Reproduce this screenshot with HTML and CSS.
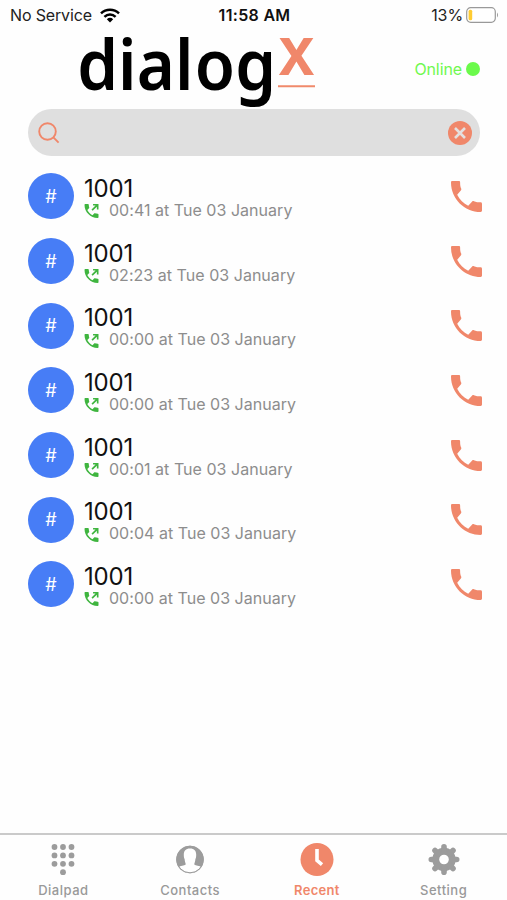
FILE: index.html
```
<!DOCTYPE html>
<html lang="en">
<head>
<meta charset="utf-8">
<title>dialogx – Recent</title>
<link rel="stylesheet" href="styles.css">
</head>
<body>
<svg class="defs" width="0" height="0" aria-hidden="true">
  <symbol id="phone" viewBox="3 3 18 18"><path d="M6.600 11c1.400 2.800 3.700 5 6.400 6.400l2.300-2.500c.3-.3.700-.3 1-.2 1.200.5 2.500.7 3.900.7.500 0 .8.400.8.9V20.200c0 .5-.3.800-.8.800C10.800 21 3 13.300 3 3.800c0-.5.300-.8.800-.8h3.700c.5 0 .8.300.8.800 0 1.400.1 2.600.6 3.600.2.400.1.800-.2 1.100z"/></symbol>
  <symbol id="outgoing" viewBox="3 3 18 18"><path d="M6.620 10.790c1.440 2.830 3.760 5.140 6.590 6.590l2.200-2.200c.27-.27.67-.36 1.020-.24 1.120.37 2.330.57 3.570.57.55 0 1 .45 1 1V20c0 .55-.45 1-1 1C10.610 21 3 13.390 3 4c0-.55.45-1 1-1h3.500c.55 0 1 .45 1 1 0 1.250.2 2.450.57 3.570.11.35.03.74-.25 1.020z"/><path d="M14 3v2h3.200l-5.200 5.200 1.500 1.500L18.900 6.400V10H21V3z"/></symbol>
</svg>
<main class="screen">
  <div class="status">
    <div class="carrier"><span>No Service</span>
      <svg width="20" height="15" viewBox="0 0 20 15"><g fill="none" stroke="#000" stroke-width="2.500"><path d="M1 5.300a13 13 0 0 1 18 0"/><path d="M4.400 8.800a8.200 8.200 0 0 1 11.200 0"/></g><path d="M6.800 11.200a4.700 4.700 0 0 1 6.400 0L10 14.500z"/></svg>
    </div>
    <div class="clock">11:58 AM</div>
    <div class="battery"><span>13%</span>
      <svg width="33" height="16" viewBox="0 0 33 16"><rect x=".7" y=".7" width="28.600" height="14.600" rx="4" fill="#fff" stroke="#999" stroke-width="1.200"/><rect x="2.600" y="2.700" width="3.600" height="10.600" rx="1.500" fill="#fc3"/><path d="M31 5.500q2 2.500 0 5z" fill="#999"/></svg>
    </div>
  </div>
  <header class="header">
    <svg class="logo" width="250" height="79" viewBox="0 0 250 79">
      <text class="word" transform="scale(.92 1)" x="7.800 52.200 72.600 114 135.500 179.500" y="59.500">dialog</text>
      <text class="mark" x="208.500" y="44.500" textLength="36" lengthAdjust="spacingAndGlyphs">x</text>
      <path d="M208 56.300h37" stroke="#f08a6b" stroke-width="2"/>
    </svg>
    <div class="online"><span>Online</span><i class="dot"></i></div>
  </header>
  <div class="search">
    <svg width="22" height="22" viewBox="0 0 22 22" fill="none" stroke="#f0876a" stroke-width="1.900"><circle cx="9.500" cy="9.500" r="8.300"/><path d="M15.400 15.400l5.200 5.200"/></svg>
    <svg width="24" height="24" viewBox="0 0 24 24"><circle cx="12" cy="12" r="12" fill="#f0876a"/><path d="M7 7l10 10M17 7L7 17" stroke="#e4e0df" stroke-width="2.600"/></svg>
  </div>
  <ul class="calls">
    <li class="call"><span class="avatar">#</span><div class="info"><div class="number">1001</div><div class="meta"><svg width="15" height="14"><use href="#outgoing"/></svg><span>00:41 at Tue 03 January</span></div></div><svg class="dial" width="31" height="31"><use href="#phone"/></svg></li>
    <li class="call"><span class="avatar">#</span><div class="info"><div class="number">1001</div><div class="meta"><svg width="15" height="14"><use href="#outgoing"/></svg><span>02:23 at Tue 03 January</span></div></div><svg class="dial" width="31" height="31"><use href="#phone"/></svg></li>
    <li class="call"><span class="avatar">#</span><div class="info"><div class="number">1001</div><div class="meta"><svg width="15" height="14"><use href="#outgoing"/></svg><span>00:00 at Tue 03 January</span></div></div><svg class="dial" width="31" height="31"><use href="#phone"/></svg></li>
    <li class="call"><span class="avatar">#</span><div class="info"><div class="number">1001</div><div class="meta"><svg width="15" height="14"><use href="#outgoing"/></svg><span>00:00 at Tue 03 January</span></div></div><svg class="dial" width="31" height="31"><use href="#phone"/></svg></li>
    <li class="call"><span class="avatar">#</span><div class="info"><div class="number">1001</div><div class="meta"><svg width="15" height="14"><use href="#outgoing"/></svg><span>00:01 at Tue 03 January</span></div></div><svg class="dial" width="31" height="31"><use href="#phone"/></svg></li>
    <li class="call"><span class="avatar">#</span><div class="info"><div class="number">1001</div><div class="meta"><svg width="15" height="14"><use href="#outgoing"/></svg><span>00:04 at Tue 03 January</span></div></div><svg class="dial" width="31" height="31"><use href="#phone"/></svg></li>
    <li class="call"><span class="avatar">#</span><div class="info"><div class="number">1001</div><div class="meta"><svg width="15" height="14"><use href="#outgoing"/></svg><span>00:00 at Tue 03 January</span></div></div><svg class="dial" width="31" height="31"><use href="#phone"/></svg></li>
  </ul>
  <nav class="tabs">
    <div class="tab"><svg width="34" height="34" viewBox="0 0 34 34"><circle cx="8.500" cy="5" r="2.900"/><circle cx="17" cy="5" r="2.900"/><circle cx="25.500" cy="5" r="2.900"/><circle cx="8.500" cy="13.400" r="2.900"/><circle cx="17" cy="13.400" r="2.900"/><circle cx="25.500" cy="13.400" r="2.900"/><circle cx="8.500" cy="21.800" r="2.900"/><circle cx="17" cy="21.800" r="2.900"/><circle cx="25.500" cy="21.800" r="2.900"/><circle cx="17" cy="30.200" r="2.900"/></svg><span>Dialpad</span></div>
    <div class="tab"><svg width="34" height="34" viewBox="0 0 34 34"><circle cx="17" cy="17.500" r="13.800"/><path d="M17 6.500c-4.300 0-6.200 2.300-6.200 6.300 0 2 .2 3.200.8 4.300.1 2.700 1.100 4 1.100 5.200-.3 1.500-4 1-6.700 2.400a13 13 0 0 0 22 0c-2.700-1.400-6.400-.9-6.700-2.400 0-1.200 1-2.500 1.100-5.200.6-1.100.8-2.300.8-4.300 0-4-1.900-6.300-6.200-6.300z" fill="#fff"/><circle cx="17" cy="17.500" r="13.300" fill="none" stroke="#9c9c9c"/></svg><span>Contacts</span></div>
    <div class="tab active"><svg width="34" height="34" viewBox="0 0 34 34"><circle cx="17" cy="17.500" r="16.500"/><path d="M17 7v11.500l5 4.200" fill="none" stroke="#fff" stroke-width="3.600"/></svg><span>Recent</span></div>
    <div class="tab"><svg width="34" height="34" viewBox="0 0 34 34"><g fill="none" stroke="#9c9c9c"><circle cx="17" cy="17.500" r="8.200" stroke-width="7"/><path d="M17 4.800v25.400M4.300 17.500h25.400M8 8.500l18 18M26 8.500l-18 18" stroke-width="5.600" stroke-linecap="round"/></g><circle cx="17" cy="17.500" r="4.800" fill="#fff"/></svg><span>Setting</span></div>
  </nav>
</main>
</body>
</html>
```
FILE: styles.css
```
* { box-sizing: border-box; }
body {
  margin: 0;
  background: #fefefe;
  color: #111;
  font-family: Inter, "Liberation Sans", sans-serif;
}
.defs { position: absolute; }
svg { display: block; flex: none; }
.screen {
  width: 507px;
  height: 900px;
  display: flex;
  flex-direction: column;
  overflow: hidden;
}
.status {
  height: 30px;
  display: grid;
  grid-template-columns: 1fr auto 1fr;
  align-items: center;
  padding: 0 8px 0 10px;
  font-size: 16px;
  line-height: 20px;
  color: #222;
}
.carrier, .battery { display: flex; align-items: center; }
.carrier { gap: 8px; letter-spacing: -.15px; }
.battery { justify-content: flex-end; gap: 3px; letter-spacing: -.1px; }
.battery svg { margin-top: -1px; }
.clock { font-weight: 600; letter-spacing: .3px; color: #111; }
.header {
  height: 79px;
  display: flex;
  justify-content: space-between;
  align-items: center;
  padding: 0 27px 0 70px;
}
.logo { overflow: visible; }
.word { font: 600 71px "Noto Sans", sans-serif; fill: #000; }
.mark { font: 700 70px "Liberation Sans", sans-serif; fill: #f0876a; }
.online {
  display: flex;
  align-items: center;
  gap: 4px;
  padding-bottom: 2px;
  font-size: 16px;
  letter-spacing: -.1px;
  color: #70f850;
}
.dot { width: 14px; height: 14px; border-radius: 50%; background: #6bfa4b; }
.search {
  height: 47px;
  margin: 0 27px 8px 28px;
  padding: 0 8px 0 10px;
  border-radius: 24px;
  background: #dfdfdf;
  display: flex;
  align-items: center;
  justify-content: space-between;
}
.calls { list-style: none; margin: 0; padding: 0 25px 0 28px; }
.call { height: 64.7px; display: flex; align-items: center; }
.avatar {
  width: 46px;
  height: 46px;
  margin-right: 10px;
  border-radius: 50%;
  background: #477df6;
  color: #fff;
  font-size: 18px;
  display: grid;
  place-items: center;
}
.info { flex: 1; }
.number { font-size: 24px; line-height: 25px; letter-spacing: -.2px; padding-top: 3px; }
.meta {
  display: flex;
  align-items: center;
  gap: 10px;
  font-size: 16px;
  line-height: 19px;
  letter-spacing: .03px;
  color: #8d8d8d;
  fill: #3fb53f;
}
.meta svg { margin-top: 2px; }
.dial { fill: #f0876a; }
.tabs {
  height: 67px;
  margin-top: auto;
  border-top: 2px solid #cacaca;
  display: grid;
  grid-template-columns: repeat(4, 1fr);
}
.tab {
  display: flex;
  flex-direction: column;
  align-items: center;
  gap: 6px;
  padding-top: 7px;
  font-size: 13px;
  line-height: 16px;
  font-weight: 500;
  letter-spacing: .5px;
  color: #999;
  fill: #9c9c9c;
}
.active { color: #f0876a; fill: #f0876a; font-weight: 600; letter-spacing: .3px; }
```
